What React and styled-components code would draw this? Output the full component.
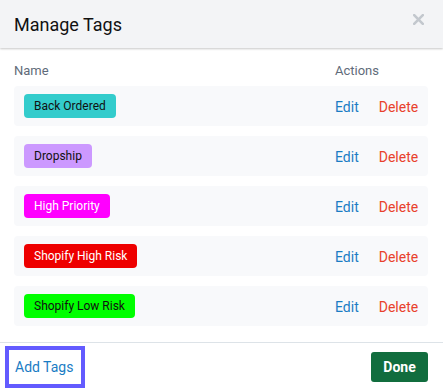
import styled, { createGlobalStyle } from "styled-components";

const tags = [
  { name: "Back Ordered", bg: "#33cccc", fg: "#111" },
  { name: "Dropship", bg: "#cc99ff", fg: "#111" },
  { name: "High Priority", bg: "#ff00ff", fg: "#fff" },
  { name: "Shopify High Risk", bg: "#ee0000", fg: "#fff" },
  { name: "Shopify Low Risk", bg: "#00ff00", fg: "#111" },
];

const GlobalStyle = createGlobalStyle`
  body {
    margin: 0;
    background: #ffffff;
    font-family: Roboto, "Liberation Sans", sans-serif;
  }
`;

const App = () => {
  return (
    <>
      <GlobalStyle />
      <Modal>
        <Header>
          <Title>Manage Tags</Title>
          <CloseButton aria-label="Close">
            <svg width="11" height="11" viewBox="0 0 11 11">
              <path
                d="M1.2 1.2 L9.8 9.8 M9.8 1.2 L1.2 9.8"
                stroke="#c3c8ce"
                strokeWidth="2.6"
                strokeLinecap="square"
              />
            </svg>
          </CloseButton>
        </Header>
        <Body>
          <ColumnRow>
            <ColumnLabel>Name</ColumnLabel>
            <ColumnLabel>Actions</ColumnLabel>
          </ColumnRow>
          <TagList>
            {tags.map((tag) => (
              <TagRow key={tag.name}>
                <div>
                  <Badge $bg={tag.bg} $fg={tag.fg}>
                    {tag.name}
                  </Badge>
                </div>
                <Actions>
                  <ActionLink $color="#1a7cc4">Edit</ActionLink>
                  <ActionLink $color="#e8412c">Delete</ActionLink>
                </Actions>
              </TagRow>
            ))}
          </TagList>
        </Body>
        <Footer>
          <AddTags>Add Tags</AddTags>
          <DoneButton>Done</DoneButton>
        </Footer>
      </Modal>
    </>
  );
};

const Modal = styled.div`
  width: 443px;
  height: 391px;
  display: flex;
  flex-direction: column;
  background: #fff;
`;

const Header = styled.div`
  height: 48px;
  flex-shrink: 0;
  display: flex;
  align-items: center;
  justify-content: space-between;
  padding: 0 19px 0 14px;
  background: #f3f4f6;
  box-shadow: 0 1px 2px rgba(0, 0, 0, 0.22);
  position: relative;
  z-index: 1;
`;

const Title = styled.div`
  font-size: 18px;
  color: #111;
`;

const CloseButton = styled.div`
  display: flex;
  margin-top: -10px;
  cursor: pointer;
`;

const Body = styled.div`
  flex: 1;
  padding: 14px 15px 0 14px;
`;

const ColumnRow = styled.div`
  display: grid;
  grid-template-columns: 1fr 93px;
  margin-bottom: 6px;
`;

const ColumnLabel = styled.div`
  font-size: 13px;
  line-height: 18px;
  color: #5f6b7a;
`;

const TagList = styled.div`
  display: flex;
  flex-direction: column;
  gap: 10px;
`;

const TagRow = styled.div`
  height: 40px;
  display: grid;
  grid-template-columns: 1fr 93px;
  align-items: center;
  padding-left: 10px;
  background: #f8f9fb;
  border-radius: 4px;
`;

const Badge = styled.span`
  display: inline-flex;
  align-items: center;
  height: 24px;
  padding: 0 10px;
  border-radius: 4px;
  font-size: 12px;
  background: ${(props) => props.$bg};
  color: ${(props) => props.$fg};
`;

const Actions = styled.div`
  display: flex;
  gap: 20px;
  padding-top: 2px;
`;

const ActionLink = styled.span`
  font-size: 14px;
  color: ${(props) => props.$color};
  cursor: pointer;
`;

const Footer = styled.div`
  height: 48px;
  flex-shrink: 0;
  border-top: 1px solid #dde3e8;
  display: flex;
  align-items: center;
  justify-content: space-between;
  padding: 0 15px 0 5px;
`;

const AddTags = styled.div`
  width: 80px;
  height: 42px;
  box-sizing: border-box;
  border: 4px solid #635bff;
  display: flex;
  align-items: center;
  padding-left: 6px;
  font-size: 14px;
  color: #1a7cc4;
`;

const DoneButton = styled.div`
  width: 57px;
  height: 30px;
  border-radius: 3px;
  background: #116d3e;
  color: #fff;
  font-size: 14px;
  font-weight: 700;
  display: flex;
  align-items: center;
  justify-content: center;
`;

export default App;
